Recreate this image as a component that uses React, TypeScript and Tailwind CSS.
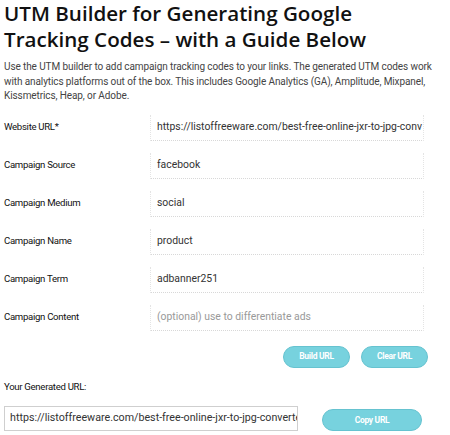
const fields = [
  { label: 'Website URL*', value: 'https://listoffreeware.com/best-free-online-jxr-to-jpg-conv' },
  { label: 'Campaign Source', value: 'facebook' },
  { label: 'Campaign Medium', value: 'social' },
  { label: 'Campaign Name', value: 'product' },
  { label: 'Campaign Term', value: 'adbanner251' },
  { label: 'Campaign Content', value: '', placeholder: '(optional) use to differentiate ads' },
];

const btn = 'rounded-full bg-[#77d2de] border border-[#66c3d0] text-white text-[8.5px] font-bold tracking-[-0.3px]';

export default function App() {
  return (
    <div className="w-[450px] h-[435px] overflow-hidden bg-white pl-1 text-[#222]" style={{ fontFamily: 'Roboto, sans-serif' }}>
      <h1 className="text-[20.6px] font-semibold leading-[26px] text-[#111] whitespace-nowrap" style={{ fontFamily: '"Open Sans", sans-serif' }}>
        UTM Builder for Generating Google<br />Tracking Codes – with a Guide Below
      </h1>
      <p className="mt-[8px] text-[10px] leading-[14.5px] tracking-[-0.1px] text-[#444] whitespace-nowrap">
        Use the UTM builder to add campaign tracking codes to your links. The generated UTM codes work<br />
        with analytics platforms out of the box. This includes Google Analytics (GA), Amplitude, Mixpanel,<br />
        Kissmetrics, Heap, or Adobe.
      </p>

      <div className="mt-[11px] flex flex-col gap-[12px]">
        {fields.map(f => (
          <div key={f.label} className="flex items-center">
            <label className="w-[146px] text-[9.6px] tracking-[-0.3px] text-[#111]">{f.label}</label>
            <div className="w-[274px] h-[26px] flex items-center px-[6px] border-x border-dotted border-x-[#e4e4e4] border-b border-b-[#d8d8d8] text-[10.4px] text-[#333] whitespace-nowrap overflow-hidden">
              {f.value ? f.value : <span className="text-[#999]">{f.placeholder}</span>}
            </div>
          </div>
        ))}
      </div>

      <div className="mt-[15px] flex justify-end gap-[11px] pr-[22px]">
        <button className={`w-[67px] h-[22px] ${btn}`}>Build URL</button>
        <button className={`w-[67px] h-[22px] ${btn}`}>Clear URL</button>
      </div>

      <div className="mt-[12px] text-[9.6px] tracking-[-0.3px] text-[#111]">Your Generated URL:</div>

      <div className="mt-[12px] flex items-center">
        <div className="w-[294px] h-[25px] border border-[#cfcfcf] flex items-center px-[5px] text-[10.7px] text-[#333] whitespace-nowrap overflow-hidden">
          https://listoffreeware.com/best-free-online-jxr-to-jpg-converter
        </div>
        <button className={`ml-[24px] mt-[3px] w-[100px] h-[22px] ${btn}`}>Copy URL</button>
      </div>
    </div>
  );
}
